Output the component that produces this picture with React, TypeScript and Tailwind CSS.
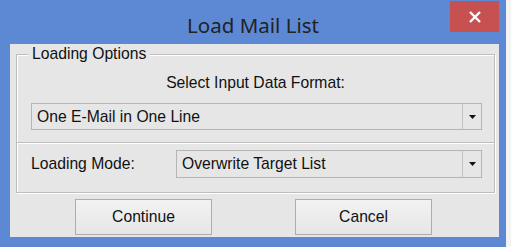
import React from 'react';

const font = { fontFamily: '"Liberation Sans", Arial, sans-serif' };

function DropArrow() {
  return (
    <svg width="7" height="4" viewBox="0 0 7 4" className="block">
      <polygon points="0,0 7,0 3.5,4" fill="#111" />
    </svg>
  );
}

function ComboBox({ value, className }: { value: string; className?: string }) {
  return (
    <div className={`flex h-[27px] border border-[#b5b5b5] bg-[#e6e6e6] ${className ?? ''}`}>
      <div className="flex flex-1 items-center pl-[5px] text-[15.7px] leading-[18px] text-[#111]">{value}</div>
      <div className="flex w-[19px] items-center justify-center border-l border-[#c4c4c4]">
        <DropArrow />
      </div>
    </div>
  );
}

function Button({ label }: { label: string }) {
  return (
    <button className="flex h-[36px] w-[137px] items-center justify-center border border-[#adadad] bg-gradient-to-b from-[#f2f2f2] to-[#e6e6e6] text-[15.7px] leading-[18px] text-[#111]">
      {label}
    </button>
  );
}

export default function App() {
  return (
    <div className="flex h-[247px] w-[511px] bg-[#f4f4f4]" style={font}>
      <div className="flex h-[247px] w-[506px] flex-col bg-[#5d89d4]">
        {/* Title bar */}
        <div className="relative flex h-[44px] items-center justify-center pt-[6px]">
          <span
            className="text-[20.5px] leading-[24px] text-[#222]"
            style={{ fontFamily: '"Noto Sans", "Open Sans", sans-serif' }}
          >
            Load Mail List
          </span>
          <div className="absolute right-[7px] top-[1px] flex h-[31px] w-[49px] items-center justify-center bg-[#c75050]">
            <svg width="12" height="12" viewBox="0 0 12 12">
              <path d="M1 1 L11 11 M11 1 L1 11" stroke="#fff" strokeWidth="2.4" />
            </svg>
          </div>
        </div>

        {/* Client area */}
        <div className="ml-[10px] mr-[7px] flex h-[193px] flex-col bg-[#e6e6e6] pl-[6px] pr-[4px]">
          <div className="relative mt-[10px] border border-[#bdbdbd] shadow-[inset_1px_1px_0_#fff,1px_1px_0_#fff]">
            <span className="absolute left-[11px] top-[-10px] bg-[#e6e6e6] px-[4px] text-[15.7px] leading-[18px] text-[#111]">
              Loading Options
            </span>
            <div className="pt-[19px] text-center text-[15.7px] leading-[18px] text-[#111]">
              Select Input Data Format:
            </div>
            <ComboBox value="One E-Mail in One Line" className="ml-[14px] mr-[12px] mt-[11px]" />
            <div className="mt-[12px] h-[2px] border-t border-[#bdbdbd] bg-white" />
            <div className="ml-[14px] mr-[12px] mt-[6px] flex items-center">
              <span className="w-[145px] text-[15.7px] leading-[18px] text-[#111]">Loading Mode:</span>
              <ComboBox value="Overwrite Target List" className="h-[28px] flex-1" />
            </div>
            <div className="h-[14px]" />
          </div>
          <div className="mt-[6px] flex gap-[83px] pl-[59px]">
            <Button label="Continue" />
            <Button label="Cancel" />
          </div>
        </div>
      </div>
    </div>
  );
}
